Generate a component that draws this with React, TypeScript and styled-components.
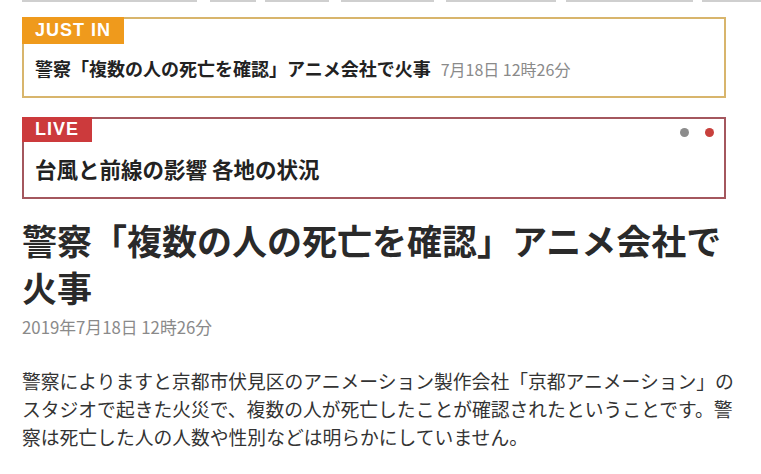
import styled, { createGlobalStyle } from "styled-components";

const GlobalStyle = createGlobalStyle`
    html, body {
        margin: 0;
        padding: 0;
        background: #ffffff;
    }
    body {
        font-family: "Noto Sans CJK JP", "Noto Sans", sans-serif;
        color: #333333;
        overflow: hidden;
    }
`;

const Page = styled.div`
    width: 761px;
    height: 474px;
    padding-left: 22px;
    box-sizing: border-box;
`;
const TabRow = styled.div`
    display: flex;
    height: 2px;
    margin-bottom: 15px;
`;
const Tab = styled.div<{ $w: number; $gap: number }>`
    flex: 0 0 ${(p) => p.$w}px;
    margin-right: ${(p) => p.$gap}px;
    border-bottom: 2px solid #cfcfcf;
`;
const Box = styled.section<{ $color: string }>`
    width: 704px;
    box-sizing: border-box;
    border: 2px solid ${(p) => p.$color};
`;
const BoxHead = styled.div`
    display: flex;
    align-items: center;
    justify-content: space-between;
    margin: -2px -2px 0 -2px;
`;
const Label = styled.div<{ $bg: string; $h: number }>`
    height: ${(p) => p.$h}px;
    line-height: ${(p) => p.$h}px;
    padding: 0 13px;
    background: ${(p) => p.$bg};
    color: #ffffff;
    font-family: "Liberation Sans", sans-serif;
    font-weight: 700;
    font-size: 18px;
    letter-spacing: 1px;
`;
const Dots = styled.div`
    display: flex;
    gap: 16px;
    margin: 5px 12px 0 0;
`;
const Dot = styled.span<{ $c: string }>`
    width: 9px;
    height: 9px;
    border-radius: 50%;
    background: ${(p) => p.$c};
`;
const Headline = styled.div<{ $size: number; $top: number; $bottom: number }>`
    padding: ${(p) => p.$top}px 11px ${(p) => p.$bottom}px 11px;
    font-size: ${(p) => p.$size}px;
    line-height: 26px;
    font-weight: 700;
    color: #222222;
    white-space: nowrap;
`;
const Stamp = styled.span`
    margin-left: 10px;
    font-size: 16px;
    font-weight: 400;
    color: #8a8a8a;
`;
const Gap = styled.div<{ $h: number }>`
    height: ${(p) => p.$h}px;
`;
const Title = styled.h1`
    width: 730px;
    margin: 17px 0 0 0;
    font-size: 35px;
    line-height: 47px;
    font-weight: 700;
    color: #2a2a2a;
    white-space: nowrap;
`;
const DateLine = styled.div`
    margin-top: 7px;
    font-size: 16.8px;
    line-height: 20px;
    color: #8a8a8a;
`;
const Body = styled.p`
    margin: 30px 0 0 0;
    font-size: 18.8px;
    line-height: 28px;
    color: #333333;
    white-space: nowrap;
`;

const tabs = [
    { w: 175, gap: 13 },
    { w: 46, gap: 9 },
    { w: 64, gap: 12 },
    { w: 93, gap: 12 },
    { w: 110, gap: 10 },
    { w: 127, gap: 9 },
    { w: 80, gap: 0 },
];

export default function App() {
    return (
        <Page>
            <GlobalStyle />
            <TabRow>
                {tabs.map((t, i) => (
                    <Tab key={i} $w={t.w} $gap={t.gap} />
                ))}
            </TabRow>

            <Box $color="#d8b56c">
                <BoxHead>
                    <Label $bg="#ef9a1c" $h={27}>JUST IN</Label>
                </BoxHead>
                <Headline $size={18} $top={11} $bottom={14}>
                    警察「複数の人の死亡を確認」アニメ会社で火事
                    <Stamp>7月18日 12時26分</Stamp>
                </Headline>
            </Box>

            <Gap $h={19} />

            <Box $color="#a4575e">
                <BoxHead>
                    <Label $bg="#cc3a3c" $h={25}>LIVE</Label>
                    <Dots>
                        <Dot $c="#8c8c8c" />
                        <Dot $c="#c8403c" />
                    </Dots>
                </BoxHead>
                <Headline $size={21.5} $top={14} $bottom={15}>
                    台風と前線の影響 各地の状況
                </Headline>
            </Box>

            <Title>
                警察「複数の人の死亡を確認」アニメ会社で
                <br />
                火事
            </Title>
            <DateLine>2019年7月18日 12時26分</DateLine>
            <Body>
                警察によりますと京都市伏見区のアニメーション製作会社「京都アニメーション」の
                <br />
                スタジオで起きた火災で、複数の人が死亡したことが確認されたということです。警
                <br />
                察は死亡した人の人数や性別などは明らかにしていません。
            </Body>
        </Page>
    );
}
